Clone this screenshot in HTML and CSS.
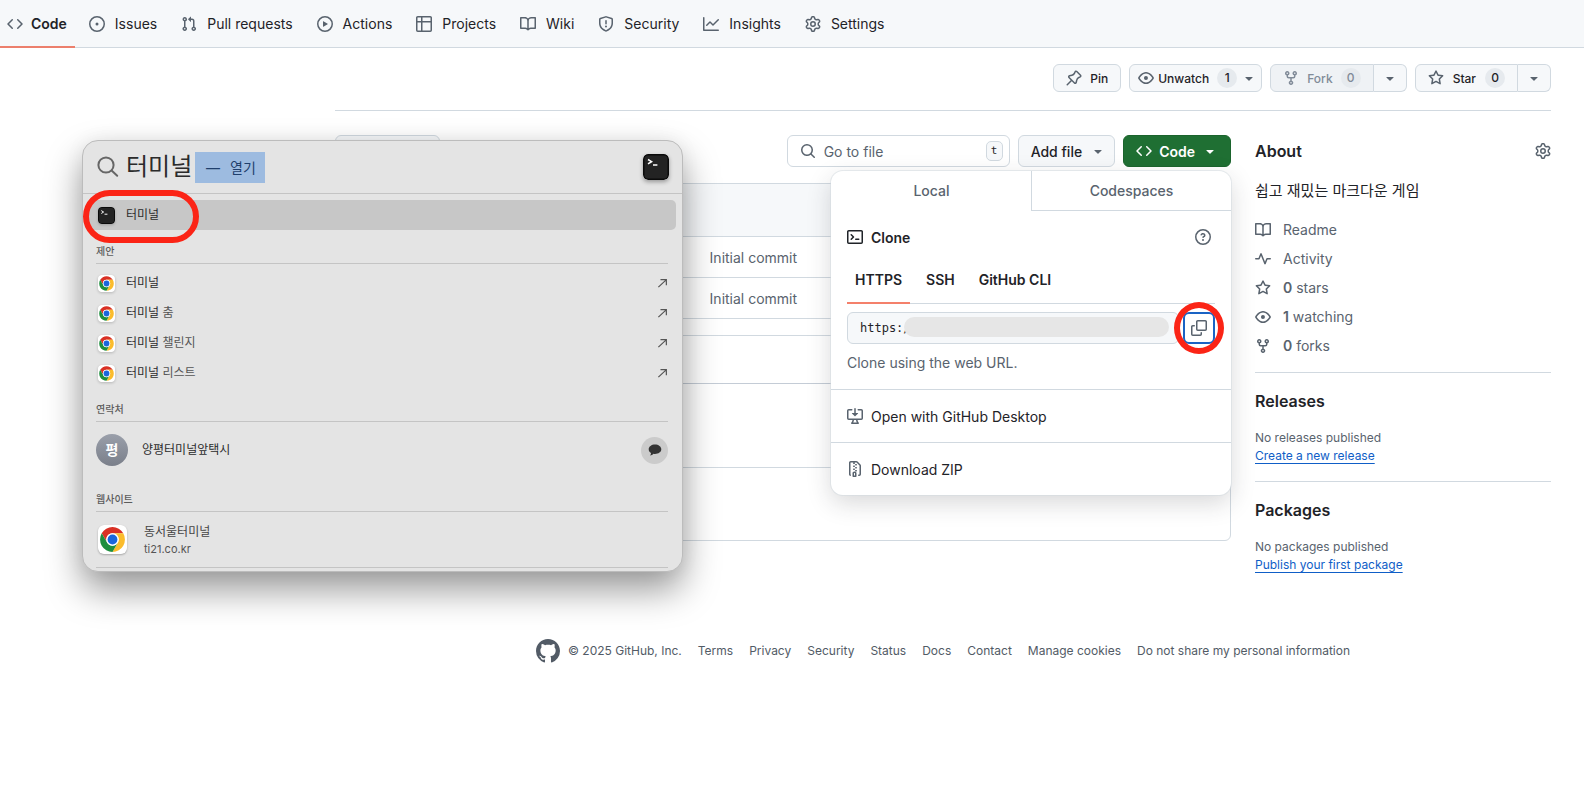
FILE: index.html
```html
<!DOCTYPE html>
<html lang="ko">
<head>
  <meta charset="utf-8">
  <meta name="viewport" content="width=device-width,initial-scale=1">
  <title>GitHub</title>
  <link rel="stylesheet" href="styles.css">
</head>
<body>

<svg class="sprite" aria-hidden="true">
  <symbol id="i-code" viewBox="0 0 16 16"><path d="m11.28 3.22 4.25 4.25a.75.75 0 0 1 0 1.06l-4.25 4.25a.749.749 0 0 1-1.275-.326.749.749 0 0 1 .215-.734L13.94 8l-3.72-3.72a.749.749 0 0 1 .326-1.275.749.749 0 0 1 .734.215Zm-6.56 0a.751.751 0 0 1 1.042.018.751.751 0 0 1 .018 1.042L2.06 8l3.72 3.72a.749.749 0 0 1-.326 1.275.749.749 0 0 1-.734-.215L.47 8.53a.75.75 0 0 1 0-1.06Z"/></symbol>
  <symbol id="i-issue" viewBox="0 0 16 16"><path d="M8 9.5a1.5 1.5 0 1 0 0-3 1.5 1.5 0 0 0 0 3Z"/><path d="M8 0a8 8 0 1 1 0 16A8 8 0 0 1 8 0ZM1.5 8a6.5 6.5 0 1 0 13 0 6.5 6.5 0 0 0-13 0Z"/></symbol>
  <symbol id="i-pr" viewBox="0 0 16 16"><path d="M1.5 3.25a2.25 2.25 0 1 1 3 2.122v5.256a2.251 2.251 0 1 1-1.5 0V5.372A2.25 2.25 0 0 1 1.5 3.25Zm5.677-.177L9.573.677A.25.25 0 0 1 10 .854V2.5h1A2.5 2.5 0 0 1 13.5 5v5.628a2.251 2.251 0 1 1-1.5 0V5a1 1 0 0 0-1-1h-1v1.646a.25.25 0 0 1-.427.177L7.177 3.427a.25.25 0 0 1 0-.354ZM3.75 2.5a.75.75 0 1 0 0 1.5.75.75 0 0 0 0-1.5Zm0 9.5a.75.75 0 1 0 0 1.5.75.75 0 0 0 0-1.5Zm8.25.75a.75.75 0 1 0 1.5 0 .75.75 0 0 0-1.5 0Z"/></symbol>
  <symbol id="i-play" viewBox="0 0 16 16"><path d="M8 0a8 8 0 1 1 0 16A8 8 0 0 1 8 0ZM1.5 8a6.5 6.5 0 1 0 13 0 6.5 6.5 0 0 0-13 0Zm4.879-2.773 4.264 2.559a.25.25 0 0 1 0 .428l-4.264 2.559A.25.25 0 0 1 6 10.559V5.442a.25.25 0 0 1 .379-.215Z"/></symbol>
  <symbol id="i-table" viewBox="0 0 16 16"><path d="M0 1.75C0 .784.784 0 1.75 0h12.5C15.216 0 16 .784 16 1.75v12.5A1.75 1.75 0 0 1 14.25 16H1.75A1.75 1.75 0 0 1 0 14.25ZM6.5 6.5v8h7.75a.25.25 0 0 0 .25-.25V6.5Zm8-1.5V1.75a.25.25 0 0 0-.25-.25H6.5V5Zm-13 1.5v7.75c0 .138.112.25.25.25H5v-8ZM5 5V1.5H1.75a.25.25 0 0 0-.25.25V5Z"/></symbol>
  <symbol id="i-book" viewBox="0 0 16 16"><path d="M0 1.75A.75.75 0 0 1 .75 1h4.253c1.227 0 2.317.59 3 1.501A3.743 3.743 0 0 1 11.006 1h4.245a.75.75 0 0 1 .75.75v10.5a.75.75 0 0 1-.75.75h-4.507a2.25 2.25 0 0 0-1.591.659l-.622.621a.75.75 0 0 1-1.06 0l-.622-.621A2.25 2.25 0 0 0 5.258 13H.75a.75.75 0 0 1-.75-.75Zm7.251 10.324.004-5.073-.002-2.253A2.25 2.25 0 0 0 5.003 2.5H1.5v9h3.757a3.75 3.75 0 0 1 1.994.574ZM8.755 4.75l-.004 7.322a3.752 3.752 0 0 1 1.992-.572H14.5v-9h-3.495a2.25 2.25 0 0 0-2.25 2.25Z"/></symbol>
  <symbol id="i-shield" viewBox="0 0 16 16"><path d="M7.467.133a1.748 1.748 0 0 1 1.066 0l5.25 1.68A1.75 1.75 0 0 1 15 3.48V7c0 1.566-.32 3.182-1.303 4.682-.983 1.498-2.585 2.813-5.032 3.855a1.697 1.697 0 0 1-1.33 0c-2.447-1.042-4.049-2.357-5.032-3.855C1.32 10.182 1 8.566 1 7V3.48a1.75 1.75 0 0 1 1.217-1.667Zm.61 1.429a.25.25 0 0 0-.153 0l-5.25 1.68a.25.25 0 0 0-.174.238V7c0 1.358.275 2.666 1.057 3.86.784 1.194 2.121 2.34 4.366 3.297a.196.196 0 0 0 .154 0c2.245-.956 3.582-2.104 4.366-3.298C13.225 9.666 13.5 8.36 13.5 7V3.48a.251.251 0 0 0-.174-.237l-5.25-1.68ZM8.75 4.75v3a.75.75 0 0 1-1.5 0v-3a.75.75 0 0 1 1.5 0ZM9 10.5a1 1 0 1 1-2 0 1 1 0 0 1 2 0Z"/></symbol>
  <symbol id="i-graph" viewBox="0 0 16 16"><path d="M1.5 1.75V13.5h13.75a.75.75 0 0 1 0 1.5H.75a.75.75 0 0 1-.75-.75V1.75a.75.75 0 0 1 1.5 0Zm14.28 2.53-5.25 5.25a.75.75 0 0 1-1.06 0L7 7.06 4.28 9.78a.751.751 0 0 1-1.042-.018.751.751 0 0 1-.018-1.042l3.25-3.25a.75.75 0 0 1 1.06 0L10 7.94l4.72-4.72a.751.751 0 0 1 1.042.018.751.751 0 0 1 .018 1.042Z"/></symbol>
  <symbol id="i-gear" viewBox="0 0 16 16"><path d="M8 0a8.2 8.2 0 0 1 .701.031C9.444.095 9.99.645 10.16 1.29l.288 1.107c.018.066.079.158.212.224.231.114.454.243.668.386.123.082.233.09.299.071l1.103-.303c.644-.176 1.392.021 1.82.63.27.385.506.792.704 1.218.315.675.111 1.422-.364 1.891l-.814.806c-.049.048-.098.147-.088.294.016.257.016.515 0 .772-.01.147.038.246.088.294l.814.806c.475.469.679 1.216.364 1.891a7.977 7.977 0 0 1-.704 1.217c-.428.61-1.176.807-1.82.63l-1.102-.302c-.067-.019-.177-.011-.3.071a5.909 5.909 0 0 1-.668.386c-.133.066-.194.158-.211.224l-.29 1.106c-.168.646-.715 1.196-1.458 1.26a8.006 8.006 0 0 1-1.402 0c-.743-.064-1.289-.614-1.458-1.26l-.289-1.106c-.018-.066-.079-.158-.212-.224a5.738 5.738 0 0 1-.668-.386c-.123-.082-.233-.09-.299-.071l-1.103.303c-.644.176-1.392-.021-1.82-.63a8.12 8.12 0 0 1-.704-1.218c-.315-.675-.111-1.422.363-1.891l.815-.806c.05-.048.098-.147.088-.294a6.214 6.214 0 0 1 0-.772c.01-.147-.038-.246-.088-.294l-.815-.806C.635 6.045.431 5.298.746 4.623a7.92 7.92 0 0 1 .704-1.217c.428-.61 1.176-.807 1.82-.63l1.102.302c.067.019.177.011.3-.071.214-.143.437-.272.668-.386.133-.066.194-.158.211-.224l.29-1.106C6.009.645 6.556.095 7.299.03 7.53.01 7.764 0 8 0Zm-.571 1.525c-.036.003-.108.036-.137.146l-.289 1.105c-.147.561-.549.967-.998 1.189-.173.086-.34.183-.5.29-.417.278-.97.423-1.529.27l-1.103-.303c-.109-.03-.175.016-.195.045-.22.312-.412.644-.573.99-.014.031-.021.11.059.19l.815.806c.411.406.562.957.53 1.456a4.709 4.709 0 0 0 0 .582c.032.499-.119 1.05-.53 1.456l-.815.806c-.081.08-.073.159-.059.19.162.346.353.677.573.989.02.03.085.076.195.046l1.102-.303c.56-.153 1.113-.008 1.53.27.161.107.328.204.501.29.447.222.85.629.997 1.189l.289 1.105c.029.109.101.143.137.146a6.6 6.6 0 0 0 1.142 0c.036-.003.108-.036.137-.146l.289-1.105c.147-.561.549-.967.998-1.189.173-.086.34-.183.5-.29.417-.278.97-.423 1.529-.27l1.103.303c.109.029.175-.016.195-.045.22-.313.411-.644.573-.99.014-.031.021-.11-.059-.19l-.815-.806c-.411-.406-.562-.957-.53-1.456a4.709 4.709 0 0 0 0-.582c-.032-.499.119-1.05.53-1.456l.815-.806c.081-.08.073-.159.059-.19a6.464 6.464 0 0 0-.573-.989c-.02-.03-.085-.076-.195-.046l-1.102.303c-.56.153-1.113.008-1.53-.27a4.44 4.44 0 0 0-.501-.29c-.447-.222-.85-.629-.997-1.189l-.289-1.105c-.029-.11-.101-.143-.137-.146a6.6 6.6 0 0 0-1.142 0ZM11 8a3 3 0 1 1-6 0 3 3 0 0 1 6 0ZM9.5 8a1.5 1.5 0 1 0-3.001.001A1.5 1.5 0 0 0 9.5 8Z"/></symbol>
  <symbol id="i-pin" viewBox="0 0 16 16"><path d="m11.294.984 3.722 3.722a1.75 1.75 0 0 1-.504 2.826l-1.327.613a3.089 3.089 0 0 0-1.707 2.084l-.584 2.454c-.317 1.332-1.972 1.8-2.94.832L5.75 11.311 1.78 15.28a.749.749 0 1 1-1.06-1.06l3.969-3.97-2.204-2.204c-.968-.968-.5-2.623.832-2.94l2.454-.584a3.08 3.08 0 0 0 2.084-1.707l.613-1.327a1.75 1.75 0 0 1 2.826-.504ZM6.283 9.723l2.732 2.731a.25.25 0 0 0 .42-.119l.584-2.454a4.586 4.586 0 0 1 2.537-3.098l1.328-.613a.25.25 0 0 0 .072-.404l-3.722-3.722a.25.25 0 0 0-.404.072l-.613 1.328a4.584 4.584 0 0 1-3.098 2.537l-2.454.584a.25.25 0 0 0-.119.42l2.731 2.732Z"/></symbol>
  <symbol id="i-eye" viewBox="0 0 16 16"><path d="M8 2c1.981 0 3.671.992 4.933 2.078 1.27 1.091 2.187 2.345 2.637 3.023a1.62 1.62 0 0 1 0 1.798c-.45.678-1.367 1.932-2.637 3.023C11.67 13.008 9.981 14 8 14c-1.981 0-3.671-.992-4.933-2.078C1.797 10.83.88 9.576.43 8.898a1.62 1.62 0 0 1 0-1.798c.45-.677 1.367-1.931 2.637-3.022C4.33 2.992 6.019 2 8 2ZM1.679 7.932a.12.12 0 0 0 0 .136c.411.622 1.241 1.75 2.366 2.717C5.176 11.758 6.527 12.5 8 12.5c1.473 0 2.825-.742 3.955-1.715 1.124-.967 1.954-2.096 2.366-2.717a.12.12 0 0 0 0-.136c-.412-.621-1.242-1.75-2.366-2.717C10.824 4.242 9.473 3.5 8 3.5c-1.473 0-2.825.742-3.955 1.715-1.124.967-1.954 2.096-2.366 2.717ZM8 10a2 2 0 1 1-.001-3.999A2 2 0 0 1 8 10Z"/></symbol>
  <symbol id="i-fork" viewBox="0 0 16 16"><path d="M5 5.372v.878c0 .414.336.75.75.75h4.5a.75.75 0 0 0 .75-.75v-.878a2.25 2.25 0 1 1 1.5 0v.878a2.25 2.25 0 0 1-2.25 2.25h-1.5v2.128a2.251 2.251 0 1 1-1.5 0V8.5h-1.5A2.25 2.25 0 0 1 3.5 6.25v-.878a2.25 2.25 0 1 1 1.5 0ZM5 3.25a.75.75 0 1 0-1.5 0 .75.75 0 0 0 1.5 0Zm6.75.75a.75.75 0 1 0 0-1.5.75.75 0 0 0 0 1.5Zm-3 8.75a.75.75 0 1 0-1.5 0 .75.75 0 0 0 1.5 0Z"/></symbol>
  <symbol id="i-star" viewBox="0 0 16 16"><path d="M8 .25a.75.75 0 0 1 .673.418l1.882 3.815 4.21.612a.75.75 0 0 1 .416 1.279l-3.046 2.97.719 4.192a.751.751 0 0 1-1.088.791L8 12.347l-3.766 1.98a.75.75 0 0 1-1.088-.79l.72-4.194L.818 6.374a.75.75 0 0 1 .416-1.28l4.21-.611L7.327.668A.75.75 0 0 1 8 .25Zm0 2.445L6.615 5.5a.75.75 0 0 1-.564.41l-3.097.45 2.24 2.184a.75.75 0 0 1 .216.664l-.528 3.084 2.769-1.456a.75.75 0 0 1 .698 0l2.77 1.456-.53-3.084a.75.75 0 0 1 .216-.664l2.24-2.183-3.096-.45a.75.75 0 0 1-.564-.41L8 2.694Z"/></symbol>
  <symbol id="i-down" viewBox="0 0 16 16"><path d="m4.427 7.427 3.396 3.396a.25.25 0 0 0 .354 0l3.396-3.396A.25.25 0 0 0 11.396 7H4.604a.25.25 0 0 0-.177.427Z"/></symbol>
  <symbol id="i-search" viewBox="0 0 16 16"><path d="M10.68 11.74a6 6 0 0 1-7.922-8.982 6 6 0 0 1 8.982 7.922l3.04 3.04a.749.749 0 0 1-.326 1.275.749.749 0 0 1-.734-.215ZM11.5 7a4.499 4.499 0 1 0-8.997 0A4.499 4.499 0 0 0 11.5 7Z"/></symbol>
  <symbol id="i-terminal" viewBox="0 0 16 16"><path d="M0 2.75C0 1.784.784 1 1.75 1h12.5c.966 0 1.75.784 1.75 1.75v10.5A1.75 1.75 0 0 1 14.25 15H1.75A1.75 1.75 0 0 1 0 13.25Zm1.75-.25a.25.25 0 0 0-.25.25v10.5c0 .138.112.25.25.25h12.5a.25.25 0 0 0 .25-.25V2.75a.25.25 0 0 0-.25-.25ZM7.25 8a.749.749 0 0 1-.22.53l-2.25 2.25a.749.749 0 0 1-1.275-.326.749.749 0 0 1 .215-.734L5.44 8 3.72 6.28a.749.749 0 0 1 .326-1.275.749.749 0 0 1 .734.215l2.25 2.25c.141.14.22.331.22.53Zm1.5 1.5h3a.75.75 0 0 1 0 1.5h-3a.75.75 0 0 1 0-1.5Z"/></symbol>
  <symbol id="i-question" viewBox="0 0 16 16"><path d="M0 8a8 8 0 1 1 16 0A8 8 0 0 1 0 8Zm8-6.5a6.5 6.5 0 1 0 0 13 6.5 6.5 0 0 0 0-13ZM6.92 6.085h.001a.749.749 0 1 1-1.342-.67c.169-.339.436-.701.849-.977C6.845 4.16 7.369 4 8 4a2.756 2.756 0 0 1 1.637.525c.503.377.863.965.863 1.725 0 .448-.115.83-.329 1.15-.205.307-.47.513-.692.662-.109.072-.22.138-.313.195l-.006.004a6.24 6.24 0 0 0-.26.16.952.952 0 0 0-.276.245.75.75 0 0 1-1.248-.832c.184-.264.42-.489.692-.661.103-.067.207-.132.313-.195l.007-.004c.1-.061.182-.11.258-.161a.969.969 0 0 0 .277-.245C8.96 6.514 9 6.427 9 6.25a.612.612 0 0 0-.262-.525A1.27 1.27 0 0 0 8 5.5c-.369 0-.595.09-.74.187a1.01 1.01 0 0 0-.34.398ZM9 11a1 1 0 1 1-2 0 1 1 0 0 1 2 0Z"/></symbol>
  <symbol id="i-copy" viewBox="0 0 16 16"><path d="M0 6.75C0 5.784.784 5 1.75 5h1.5a.75.75 0 0 1 0 1.5h-1.5a.25.25 0 0 0-.25.25v7.5c0 .138.112.25.25.25h7.5a.25.25 0 0 0 .25-.25v-1.5a.75.75 0 0 1 1.5 0v1.5A1.75 1.75 0 0 1 9.25 16h-7.5A1.75 1.75 0 0 1 0 14.25Z"/><path d="M5 1.75C5 .784 5.784 0 6.75 0h7.5C15.216 0 16 .784 16 1.75v7.5A1.75 1.75 0 0 1 14.25 11h-7.5A1.75 1.75 0 0 1 5 9.25Zm1.75-.25a.25.25 0 0 0-.25.25v7.5c0 .138.112.25.25.25h7.5a.25.25 0 0 0 .25-.25v-7.5a.25.25 0 0 0-.25-.25Z"/></symbol>
  <symbol id="i-desktop" viewBox="0 0 16 16"><path d="m4.927 5.427 2.896 2.896a.25.25 0 0 0 .354 0l2.896-2.896A.25.25 0 0 0 10.896 5H8.75V.75a.75.75 0 1 0-1.5 0V5H5.104a.25.25 0 0 0-.177.427Z"/><path d="M1.573 2.573a.25.25 0 0 0-.073.177v7.5a.25.25 0 0 0 .25.25h12.5a.25.25 0 0 0 .25-.25v-7.5a.25.25 0 0 0-.25-.25h-3a.75.75 0 1 1 0-1.5h3A1.75 1.75 0 0 1 16 2.75v7.5A1.75 1.75 0 0 1 14.25 12h-3.727c.099 1.041.52 1.872 1.292 2.757A.752.752 0 0 1 11.25 16h-6.5a.75.75 0 0 1-.565-1.243c.772-.885 1.192-1.716 1.292-2.757H1.75A1.75 1.75 0 0 1 0 10.25v-7.5A1.75 1.75 0 0 1 1.75 1h3a.75.75 0 0 1 0 1.5h-3a.25.25 0 0 0-.177.073ZM6.982 12a5.72 5.72 0 0 1-.765 2.5h3.566a5.72 5.72 0 0 1-.765-2.5H6.982Z"/></symbol>
  <symbol id="i-zip" viewBox="0 0 16 16"><path d="M3.5 1.75v11.5c0 .09.048.173.126.217a.75.75 0 0 1-.752 1.298A1.748 1.748 0 0 1 2 13.25V1.75C2 .784 2.784 0 3.75 0h5.586c.464 0 .909.185 1.237.513l2.914 2.914c.329.328.513.773.513 1.237v8.586A1.75 1.75 0 0 1 12.25 15h-.5a.75.75 0 0 1 0-1.5h.5a.25.25 0 0 0 .25-.25V4.664a.25.25 0 0 0-.073-.177L9.513 1.573a.25.25 0 0 0-.177-.073H7.25a.75.75 0 0 1 0 1.5h-.5a.75.75 0 0 1 0-1.5h-3a.25.25 0 0 0-.25.25Zm3.75 8.75h.5c.966 0 1.75.784 1.75 1.75v3a.75.75 0 0 1-.75.75h-2.5a.75.75 0 0 1-.75-.75v-3c0-.966.784-1.75 1.75-1.75ZM6 5.25a.75.75 0 0 1 .75-.75h.5a.75.75 0 0 1 0 1.5h-.5A.75.75 0 0 1 6 5.25Zm.75 2.25h.5a.75.75 0 0 1 0 1.5h-.5a.75.75 0 0 1 0-1.5ZM8 6.75A.75.75 0 0 1 8.75 6h.5a.75.75 0 0 1 0 1.5h-.5A.75.75 0 0 1 8 6.75ZM8.75 3h.5a.75.75 0 0 1 0 1.5h-.5a.75.75 0 0 1 0-1.5ZM8 9.75A.75.75 0 0 1 8.75 9h.5a.75.75 0 0 1 0 1.5h-.5A.75.75 0 0 1 8 9.75Zm-1 2.5v2.25h1v-2.25a.25.25 0 0 0-.25-.25h-.5a.25.25 0 0 0-.25.25Z"/></symbol>
  <symbol id="i-pulse" viewBox="0 0 16 16"><path d="M6 2c.306 0 .582.187.696.471L10 10.731l1.304-3.26A.751.751 0 0 1 12 7h3.25a.75.75 0 0 1 0 1.5h-2.742l-1.812 4.528a.751.751 0 0 1-1.392 0L6 4.77 4.696 8.03A.75.75 0 0 1 4 8.5H.75a.75.75 0 0 1 0-1.5h2.742l1.812-4.529A.751.751 0 0 1 6 2Z"/></symbol>
  <symbol id="i-github" viewBox="0 0 16 16"><path d="M8 0c4.42 0 8 3.58 8 8a8.013 8.013 0 0 1-5.45 7.59c-.4.08-.55-.17-.55-.38 0-.27.01-1.13.01-2.2 0-.75-.25-1.23-.54-1.48 1.78-.2 3.65-.88 3.65-3.95 0-.88-.31-1.59-.82-2.15.08-.2.36-1.02-.08-2.12 0 0-.67-.22-2.2.82-.64-.18-1.32-.27-2-.27-.68 0-1.36.09-2 .27-1.53-1.03-2.2-.82-2.2-.82-.44 1.1-.16 1.92-.08 2.12-.51.56-.82 1.28-.82 2.15 0 3.06 1.86 3.75 3.64 3.95-.23.2-.44.55-.51 1.07-.46.21-1.61.55-2.33-.66-.15-.24-.6-.83-1.23-.82-.67.01-.27.38.01.53.34.19.73.9.82 1.13.16.45.68 1.31 2.69.94 0 .67.01 1.3.01 1.49 0 .21-.15.45-.55.38A7.995 7.995 0 0 1 0 8c0-4.42 3.58-8 8-8Z"/></symbol>

  <symbol id="i-lens" viewBox="0 0 22 22"><g fill="none" stroke="currentColor" stroke-width="2" stroke-linecap="round"><circle cx="9" cy="9" r="7.6"/><path d="m14.6 14.6 5.6 5.2"/></g></symbol>
  <symbol id="i-arrow" viewBox="0 0 12 12"><path d="M1.5 10 10 2M3.8 1.8H10.2V8" fill="none" stroke="currentColor" stroke-width="1.3"/></symbol>
  <symbol id="i-shell" viewBox="0 0 26 26"><rect width="26" height="26" rx="5" fill="#0b0b0b"/><rect x="1.5" y="1.5" width="23" height="23" rx="3.5" fill="#232323"/><path d="m5 5.500 3.600 2.200L5 9.900M10 11h4.400" fill="none" stroke="#fff" stroke-width="1.500"/></symbol>
  <symbol id="i-chrome" viewBox="0 0 56 56"><rect width="56" height="56" rx="12" fill="#fff"/><g transform="translate(4 4)"><path fill="#d93025" d="M3.22 12A24 24 0 0 1 44.78 12H24A12 12 0 0 0 13.61 30Z"/><path fill="#fbbc2c" d="M44.78 12A24 24 0 0 1 24 48L34.39 30A12 12 0 0 0 24 12Z"/><path fill="#1e8e3e" d="M24 48A24 24 0 0 1 3.22 12L13.61 30A12 12 0 0 0 34.39 30Z"/><circle cx="24" cy="24" r="12" fill="#fff"/><circle cx="24" cy="24" r="9.5" fill="#1a66dc"/></g></symbol>
  <symbol id="i-bubble" viewBox="0 0 14 12"><path fill="#333" d="M7 .5c3.500 0 6.300 2.100 6.300 4.800S10.500 10 7 10c-.6 0-1.100 0-1.600-.2C4.600 10.700 3.500 11.500 2.100 11.600c.6-.7.9-1.500.9-2.500C1.500 8.200.7 6.900.7 5.300.7 2.600 3.500.5 7 .5Z"/></symbol>
</svg>

<nav class="repo-nav" aria-label="Repository">
  <a class="nav-item active" href="#"><svg class="icon"><use href="#i-code"/></svg>Code</a>
  <a class="nav-item" href="#"><svg class="icon"><use href="#i-issue"/></svg>Issues</a>
  <a class="nav-item" href="#"><svg class="icon"><use href="#i-pr"/></svg>Pull requests</a>
  <a class="nav-item" href="#"><svg class="icon"><use href="#i-play"/></svg>Actions</a>
  <a class="nav-item" href="#"><svg class="icon"><use href="#i-table"/></svg>Projects</a>
  <a class="nav-item" href="#"><svg class="icon"><use href="#i-book"/></svg>Wiki</a>
  <a class="nav-item" href="#"><svg class="icon"><use href="#i-shield"/></svg>Security</a>
  <a class="nav-item" href="#"><svg class="icon"><use href="#i-graph"/></svg>Insights</a>
  <a class="nav-item" href="#"><svg class="icon"><use href="#i-gear"/></svg>Settings</a>
</nav>

<div class="container">
  <div class="repo-actions">
    <button class="btn btn-sm" type="button"><svg class="icon"><use href="#i-pin"/></svg>Pin</button>
    <button class="btn btn-sm btn-watch" type="button"><svg class="icon"><use href="#i-eye"/></svg>Unwatch<span class="counter">1</span><svg class="icon"><use href="#i-down"/></svg></button>
    <div class="btn-group">
      <button class="btn btn-sm" type="button" disabled><svg class="icon"><use href="#i-fork"/></svg>Fork<span class="counter">0</span></button>
      <button class="btn btn-sm btn-caret" type="button" aria-label="Forks"><svg class="icon"><use href="#i-down"/></svg></button>
    </div>
    <div class="btn-group">
      <button class="btn btn-sm btn-star" type="button"><svg class="icon"><use href="#i-star"/></svg>Star<span class="counter">0</span></button>
      <button class="btn btn-sm btn-caret" type="button" aria-label="Lists"><svg class="icon"><use href="#i-down"/></svg></button>
    </div>
  </div>

  <div class="layout">
    <main class="content">
      <div class="toolbar">
        <button class="btn branch" type="button" aria-label="Branch"></button>
        <label class="file-search">
          <svg class="icon"><use href="#i-search"/></svg>
          <input type="text" placeholder="Go to file" aria-label="Go to file">
          <kbd>t</kbd>
        </label>
        <button class="btn btn-add" type="button">Add file<svg class="icon"><use href="#i-down"/></svg></button>
        <div class="code-menu">
          <button class="btn btn-primary" type="button"><svg class="icon"><use href="#i-code"/></svg>Code<svg class="icon"><use href="#i-down"/></svg></button>

          <div class="popover">
            <div class="pop-tabs">
              <button class="pop-tab selected" type="button">Local</button>
              <button class="pop-tab" type="button">Codespaces</button>
            </div>
            <div class="clone">
              <div class="clone-head">
                <svg class="icon"><use href="#i-terminal"/></svg>
                <b>Clone</b>
                <a class="help" href="#" aria-label="Help"><svg class="icon"><use href="#i-question"/></svg></a>
              </div>
              <div class="clone-tabs">
                <a class="selected" href="#">HTTPS</a>
                <a href="#">SSH</a>
                <a href="#">GitHub CLI</a>
              </div>
              <div class="clone-url">
                <input type="text" value="https:/" aria-label="Clone URL" readonly>
                <span class="redact"></span>
                <button class="copy" type="button" aria-label="Copy URL"><svg class="icon"><use href="#i-copy"/></svg></button>
                <span class="mark mark-copy"></span>
              </div>
              <p class="hint">Clone using the web URL.</p>
            </div>
            <a class="pop-link" href="#"><svg class="icon"><use href="#i-desktop"/></svg>Open with GitHub Desktop</a>
            <a class="pop-link" href="#"><svg class="icon"><use href="#i-zip"/></svg>Download ZIP</a>
          </div>
        </div>
      </div>

      <div class="box">
        <table class="files">
          <thead><tr><th></th><th></th></tr></thead>
          <tbody>
            <tr><td></td><td>Initial commit</td></tr>
            <tr><td></td><td>Initial commit</td></tr>
          </tbody>
        </table>
      </div>

      <div class="box readme">
        <div class="readme-tabs"></div>
        <div class="readme-title"></div>
        <div class="readme-body"></div>
      </div>
    </main>

    <aside class="sidebar">
      <section>
        <div class="about-head">
          <h2>About</h2>
          <a href="#" aria-label="Edit repository details"><svg class="icon"><use href="#i-gear"/></svg></a>
        </div>
        <p class="about-text">쉽고 재밌는 마크다운 게임</p>
        <ul class="meta">
          <li><a href="#"><svg class="icon"><use href="#i-book"/></svg>Readme</a></li>
          <li><a href="#"><svg class="icon"><use href="#i-pulse"/></svg>Activity</a></li>
          <li><a href="#"><svg class="icon"><use href="#i-star"/></svg><span><b>0</b> stars</span></a></li>
          <li><a href="#"><svg class="icon"><use href="#i-eye"/></svg><span><b>1</b> watching</span></a></li>
          <li><a href="#"><svg class="icon"><use href="#i-fork"/></svg><span><b>0</b> forks</span></a></li>
        </ul>
      </section>
      <section>
        <h2>Releases</h2>
        <p class="small">No releases published<br><a href="#">Create a new release</a></p>
      </section>
      <section>
        <h2>Packages</h2>
        <p class="small">No packages published<br><a href="#">Publish your first package</a></p>
      </section>
    </aside>
  </div>

  <footer class="footer">
    <svg class="logo"><use href="#i-github"/></svg>
    <span class="copyright">© 2025 GitHub, Inc.</span>
    <a href="#">Terms</a>
    <a href="#">Privacy</a>
    <a href="#">Security</a>
    <a href="#">Status</a>
    <a href="#">Docs</a>
    <a href="#">Contact</a>
    <a href="#">Manage cookies</a>
    <a href="#">Do not share my personal information</a>
  </footer>
</div>

<!-- macOS Spotlight window -->
<div class="spotlight">
  <div class="sp-search">
    <svg class="sp-lens"><use href="#i-lens"/></svg>
    <input type="text" value="터미널" aria-label="Spotlight 검색">
    <span class="sp-complete"><span>—</span>열기</span>
    <svg class="sp-app"><use href="#i-shell"/></svg>
  </div>

  <a class="sp-row sp-hit" href="#">
    <svg class="sp-icon"><use href="#i-shell"/></svg>터미널
    <span class="mark mark-hit"></span>
  </a>

  <h3>제안</h3>
  <ul class="sp-list">
    <li><a class="sp-row" href="#"><svg class="sp-icon"><use href="#i-chrome"/></svg><span>터미널</span><svg class="sp-arrow"><use href="#i-arrow"/></svg></a></li>
    <li><a class="sp-row" href="#"><svg class="sp-icon"><use href="#i-chrome"/></svg><span>터미널 <i>춤</i></span><svg class="sp-arrow"><use href="#i-arrow"/></svg></a></li>
    <li><a class="sp-row" href="#"><svg class="sp-icon"><use href="#i-chrome"/></svg><span>터미널 <i>챌린지</i></span><svg class="sp-arrow"><use href="#i-arrow"/></svg></a></li>
    <li><a class="sp-row" href="#"><svg class="sp-icon"><use href="#i-chrome"/></svg><span>터미널 <i>리스트</i></span><svg class="sp-arrow"><use href="#i-arrow"/></svg></a></li>
  </ul>

  <h3>연락처</h3>
  <div class="sp-contact">
    <span class="avatar">평</span>
    <span>양평터미널앞택시</span>
    <button type="button" aria-label="메시지"><svg><use href="#i-bubble"/></svg></button>
  </div>

  <h3>웹사이트</h3>
  <a class="sp-site" href="#">
    <svg><use href="#i-chrome"/></svg>
    <span>동서울터미널<small>ti21.co.kr</small></span>
  </a>
</div>

</body>
</html>
```
FILE: styles.css
```css
*{box-sizing:border-box}
body{margin:0;background:#fff;color:#1f2328;font:14px/21px Inter,"Noto Sans CJK KR",sans-serif}
a{color:inherit;text-decoration:none}
h2,h3,p,ul{margin:0;padding:0}
ul{list-style:none}
b{font-weight:600}
button,input{font:inherit;color:inherit;margin:0}
.sprite{display:none}
.icon{width:16px;height:16px;flex:none;fill:#59636e;display:block}

/* repo nav */
.repo-nav{display:flex;gap:8px;height:48px;background:#f6f8fa;border-bottom:1px solid #d1d9e0}
.nav-item{display:flex;align-items:center;gap:10px;padding:0 8px;height:47px;line-height:20px;white-space:nowrap}
.nav-item.active{gap:8px;height:48px;margin-right:-2px;padding:1px 8px 0 7px;font-weight:600;border-bottom:2px solid #ec7f6c}

.container{max-width:1281px;margin-left:auto;padding:0 33px 0 32px}

/* buttons */
.btn{display:flex;align-items:center;justify-content:center;gap:8px;height:32px;padding:0 12px;
     background:#f6f8fa;border:1px solid #d1d9e0;border-radius:6px;font-weight:500;white-space:nowrap}
.btn-sm{height:28px;font-size:12px}
.btn-add{padding-right:8px}
.btn-primary{gap:7px;background:#1f6f33;border-color:#1b642d;color:#fff;font-weight:600}
.btn-primary .icon{fill:#fff}
.btn-watch{gap:4px;padding:0 4px 0 8px}
.btn-watch .counter{margin-left:4px}
.btn-star{gap:9px}
.btn-group{display:flex}
.btn-group .btn:first-child{border-radius:6px 0 0 6px}
.btn-group .btn:last-child{border-radius:0 6px 6px 0;border-left:0}
.btn-caret{padding:0 8px}
.btn:disabled{background:#eff2f5;color:#818b98}
.btn:disabled .icon{fill:#818b98}
.counter{min-width:20px;padding:0 6px;border-radius:20px;background:#e6eaee;line-height:20px;text-align:center}
.repo-actions{display:flex;justify-content:flex-end;gap:8px;padding:16px 0 18px;border-bottom:1px solid #d1d9e0}

.layout{display:grid;grid-template-columns:minmax(0,1fr) 296px;gap:24px;margin-top:24px}

/* toolbar */
.toolbar{display:flex;gap:8px;margin-bottom:16px}
.branch{width:105px;margin-right:auto}
.file-search{display:flex;align-items:center;gap:8px;width:223px;height:32px;padding:0 6px 0 12px;
             border:1px solid #d1d9e0;border-radius:6px}
.file-search input{flex:1;min-width:0;border:0;padding:0;background:none;outline:0}
.file-search input::placeholder{color:#59636e;opacity:1}
kbd{width:17px;height:20px;border:1px solid #d1d9e0;border-radius:5px;background:#f6f8fa;
    font:11px/18px "DejaVu Sans Mono",monospace;text-align:center}

/* code dropdown */
.code-menu{position:relative}
.popover{position:absolute;top:36px;right:0;width:400px;z-index:10;background:#fff;border-radius:12px;
         box-shadow:0 0 0 1px #d1d9e080,0 8px 24px #25292e2e}
.pop-tabs{display:grid;grid-template-columns:1fr 1fr}
.pop-tab{height:40px;border:0;border-bottom:1px solid #d1d9e0;border-left:1px solid #d1d9e0;background:none;
         font-weight:500;color:#59636e;padding:0}
.pop-tab.selected{border-color:transparent}
.pop-tab:last-child{border-radius:0 12px 0 0}
.clone{padding:14px 16px 16px}
.clone-head{display:flex;align-items:center;gap:8px;height:24px}
.clone-head > .icon{fill:#1f2328}
.help{margin:0 4px 0 auto}
.clone-tabs{display:flex;gap:8px;margin-top:12px;border-bottom:1px solid #d1d9e0;font-weight:600}
.clone-tabs a{height:43px;padding:8px 8px 0;margin-bottom:-1px}
.clone-tabs .selected{border-bottom:2px solid #f4806b}
.clone-url{position:relative;display:flex;gap:4px;margin-top:8px}
.clone-url input{flex:1;min-width:0;height:32px;padding:0 12px;border:1px solid #d1d9e0;border-radius:6px;
                 background:#f6f8fa;font:12px "DejaVu Sans Mono",monospace}
.redact{position:absolute;left:57px;top:5px;width:265px;height:20px;border-radius:10px;background:#e6e6e6}
.copy{display:grid;place-items:center;width:32px;height:32px;padding:0;border:2px solid #1a63c4;border-radius:6px;background:#fff}
.hint{margin-top:8px;color:#59636e}
.pop-link{display:flex;align-items:center;gap:8px;height:53px;padding:0 16px;border-top:1px solid #d1d9e0}

/* hand-drawn style highlights */
.mark{position:absolute;border:6px solid #fb2416;pointer-events:none}
.mark-copy{top:-10px;right:-9px;width:50px;height:52px;border-radius:50%}
.mark-hit{top:-10px;left:-6px;width:116px;height:53px;border-radius:27px}

/* file list */
.box{border:1px solid #d1d9e0;border-radius:6px;overflow:hidden}
.files{width:100%;border-collapse:separate;border-spacing:0;table-layout:fixed;color:#59636e}
.files th{height:52px;padding:0;background:#f6f8fa}
.files th:first-child{width:40%}
.files td{height:41px;padding:0 16px;border-top:1px solid #d1d9e0}
.readme{margin-top:16px}
.readme-tabs{height:48px;border-bottom:1px solid #c4ccd6}
.readme-title{height:84px;border-bottom:1px solid #d1d9e0}
.readme-body{height:72px}

/* sidebar */
.sidebar section{padding-bottom:16px}
.sidebar section + section{padding-top:16px;border-top:1px solid #d1d9e0}
.sidebar h2{font-size:16px;line-height:24px;font-weight:600}
.about-head{display:flex;align-items:center;justify-content:space-between;height:32px}
.about-text{margin-top:12px;font-size:15px;line-height:24px}
.meta{display:grid;gap:8px;margin-top:16px;color:#59636e}
.meta a{display:flex;align-items:center;gap:12px}
.small{margin-top:16px;font-size:12px;line-height:18px;color:#59636e}
.small a{color:#0f5ec7;text-decoration:underline;text-underline-offset:3px}

.footer{display:flex;align-items:center;justify-content:center;gap:16px;margin-top:49px;
        font-size:12px;line-height:18px;color:#525b66;white-space:nowrap}
.logo{width:24px;height:24px;fill:#525b66}
.copyright{margin-left:-8px}

/* spotlight */
.spotlight{position:absolute;left:82px;top:140px;width:601px;z-index:20;padding-bottom:3px;
           background:#e4e4e4;border:1px solid #bcbcbc;border-radius:16px;font-size:12px;line-height:18px;color:#2b2b2b;
           box-shadow:0 18px 36px #0006,0 0 20px #0000000d}
.spotlight svg{flex:none}
.sp-search{display:flex;align-items:center;height:53px;padding:0 13px 0 14px;border-bottom:1px solid #c4c4c4}
.sp-lens{width:22px;height:22px;color:#666}
.sp-search input{width:69px;margin-left:7px;padding:0;border:0;background:none;outline:0;font-size:24px;line-height:32px}
.sp-complete{display:flex;gap:10px;padding:0 9px 0 11px;background:#9dbbe0;color:#1f3f6c;font-size:14px;line-height:31px}
.sp-app{width:26px;height:26px;margin-left:auto;border-radius:5px;box-shadow:0 2px 4px #0005}
.sp-row{position:relative;display:flex;align-items:center;gap:11px;height:30px;padding:0 14px 0 15px}
.sp-icon{width:17px;height:17px;border-radius:4px;box-shadow:0 1px 3px #0003}
.sp-hit{margin:6px 6px 0;padding:0 9px;background:#c7c7c7;border-radius:5px}
.sp-list{margin-top:4px}
.sp-row i{font-style:normal;color:#555}
.sp-arrow{width:11px;height:11px;margin-left:auto;color:#555}
.spotlight h3{height:34px;margin:0 14px 0 13px;padding-top:12px;border-bottom:1px solid #c4c4c4;
              font-size:10px;font-weight:500;color:#5c5c5c}
.sp-contact{display:flex;align-items:center;gap:14px;height:56px;padding:0 14px 0 13px}
.avatar{width:32px;height:32px;border-radius:50%;background:linear-gradient(#9a9faa,#7a7f8a);color:#fff;
        font-size:14px;font-weight:700;line-height:32px;text-align:center}
.sp-contact button{display:grid;place-items:center;width:27px;height:27px;margin-left:auto;padding:0;
                   border:0;border-radius:50%;background:#cbcbcb}
.sp-contact button svg{width:14px;height:12px}
.sp-site{display:flex;align-items:center;gap:17px;height:56px;margin:0 14px 0 13px;padding-left:2px;
         border-bottom:1px solid #c4c4c4;color:#444}
.sp-site svg{width:29px;height:29px;border-radius:6px;box-shadow:0 1px 2px #0004}
.sp-site small{display:block;font-size:11px;line-height:16px;color:#555}
```
